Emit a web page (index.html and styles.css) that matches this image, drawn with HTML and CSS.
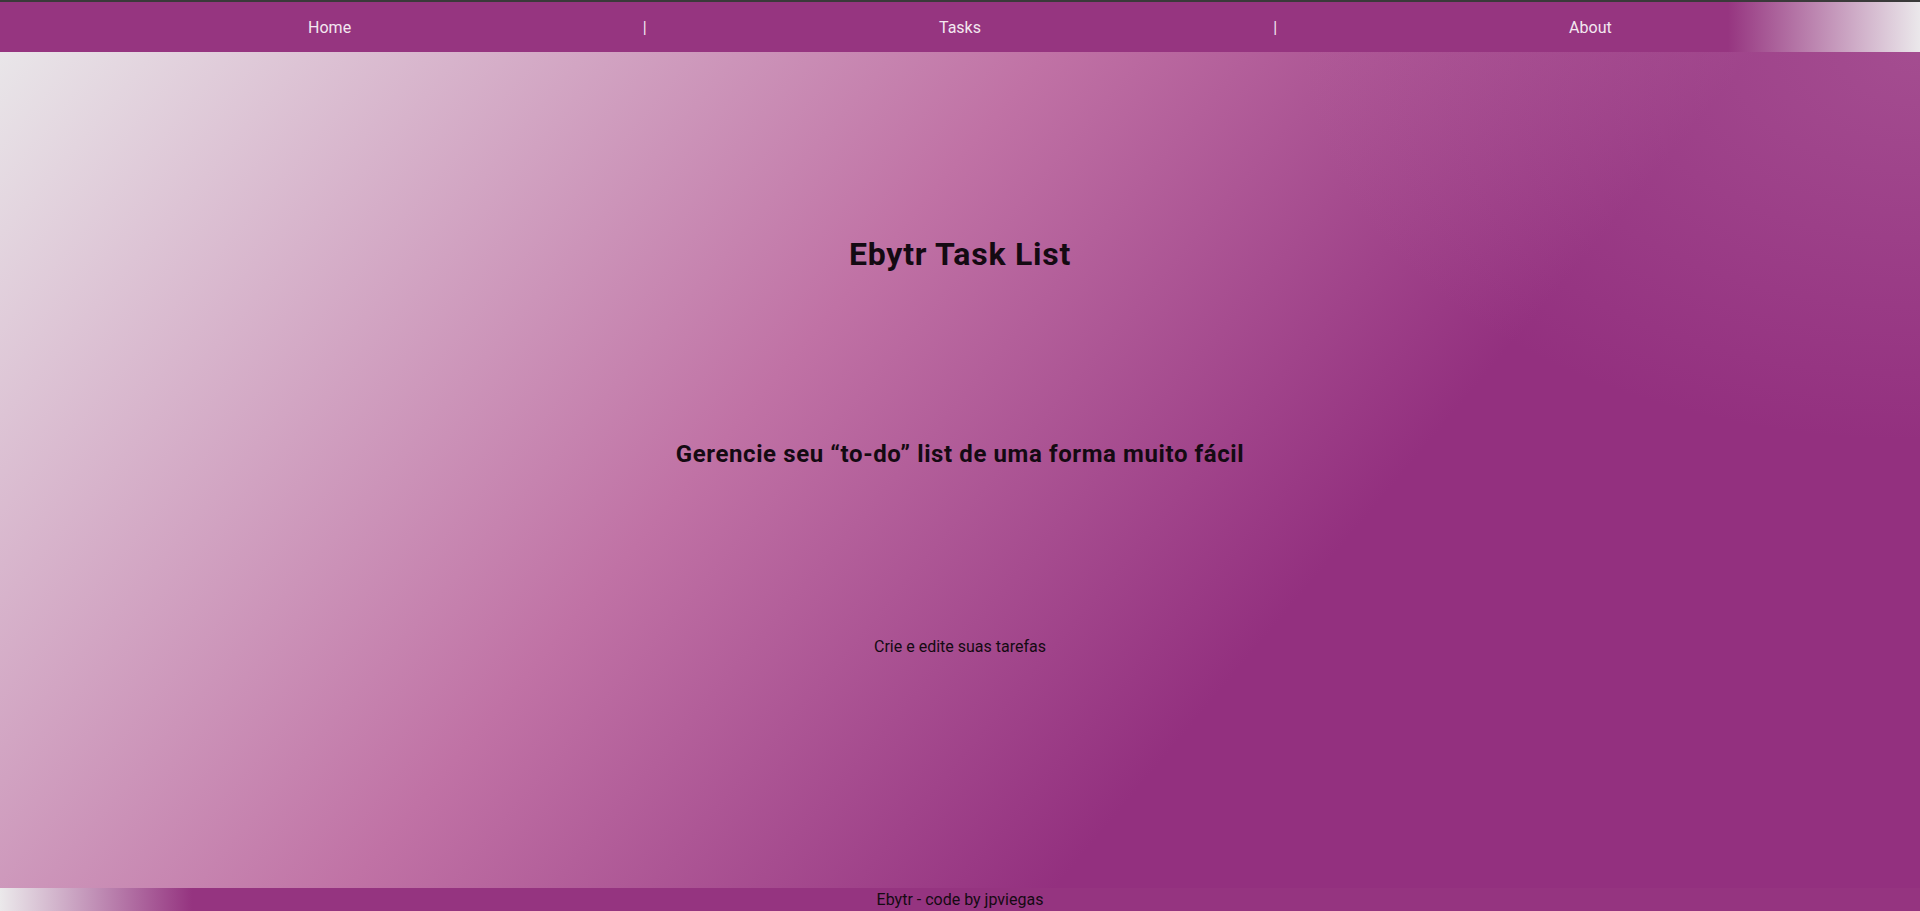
FILE: index.html
```html
<!DOCTYPE html>
<html lang="pt-BR">
<head>
<meta charset="utf-8">
<title>Ebytr Task List</title>
<link rel="stylesheet" href="styles.css">
</head>
<body>
  <header class="topbar">
    <nav class="nav">
      <a class="nav-link" href="#">Home</a>
      <span class="nav-sep">|</span>
      <a class="nav-link" href="#">Tasks</a>
      <span class="nav-sep">|</span>
      <a class="nav-link" href="#">About</a>
    </nav>
  </header>
  <main class="hero">
    <h1 class="hero-title">Ebytr Task List</h1>
    <h2 class="hero-subtitle">Gerencie seu “to-do” list de uma forma muito fácil</h2>
    <p class="hero-text">Crie e edite suas tarefas</p>
  </main>
  <footer class="footer">Ebytr - code by jpviegas</footer>
</body>
</html>
```

FILE: styles.css
```css
* {
  box-sizing: border-box;
}

html, body {
  margin: 0;
  height: 100%;
}

body {
  display: flex;
  flex-direction: column;
  font-family: Roboto, "Liberation Sans", sans-serif;
  color: #140a12;
}

.topbar {
  height: 52px;
  flex: 0 0 auto;
  border-top: 2px solid #3a3a3a;
  background: linear-gradient(to left, #ebe8eb 0%, #963580 10%, #963580 100%);
  display: flex;
  align-items: center;
}

.nav {
  width: 1576px;
  margin: 0 auto;
  display: grid;
  grid-template-columns: repeat(5, 1fr);
  justify-items: center;
  align-items: center;
  font-size: 16px;
  line-height: 20px;
  color: #f3e8f0;
  padding-top: 1px;
}

.nav-link {
  color: inherit;
  text-decoration: none;
}

.nav-sep {
  color: inherit;
}

.hero {
  flex: 1 1 auto;
  display: flex;
  flex-direction: column;
  align-items: center;
  padding-top: 182px;
  text-align: center;
  background:
    radial-gradient(ellipse 620px 390px at 100% 0%, rgba(190, 120, 170, 0.4) 0%, rgba(190, 120, 170, 0) 100%),
    linear-gradient(130deg, #e9e6e9 0%, #c072a5 40%, #93307f 67%, #93307f 100%);
}

.hero-title {
  margin: 0;
  font-size: 32px;
  line-height: 40px;
  font-weight: 700;
  letter-spacing: 0.75px;
}

.hero-subtitle {
  margin: 165px 0 0;
  font-size: 24px;
  line-height: 30px;
  font-weight: 700;
  letter-spacing: 0.6px;
}

.hero-text {
  margin: 168px 0 0;
  font-size: 16px;
  line-height: 20px;
}

.footer {
  flex: 0 0 23px;
  height: 23px;
  line-height: 23px;
  text-align: center;
  font-size: 16px;
  color: #140a12;
  background: linear-gradient(to right, #ebe9eb 0%, #953480 10%, #953480 100%);
}
```
